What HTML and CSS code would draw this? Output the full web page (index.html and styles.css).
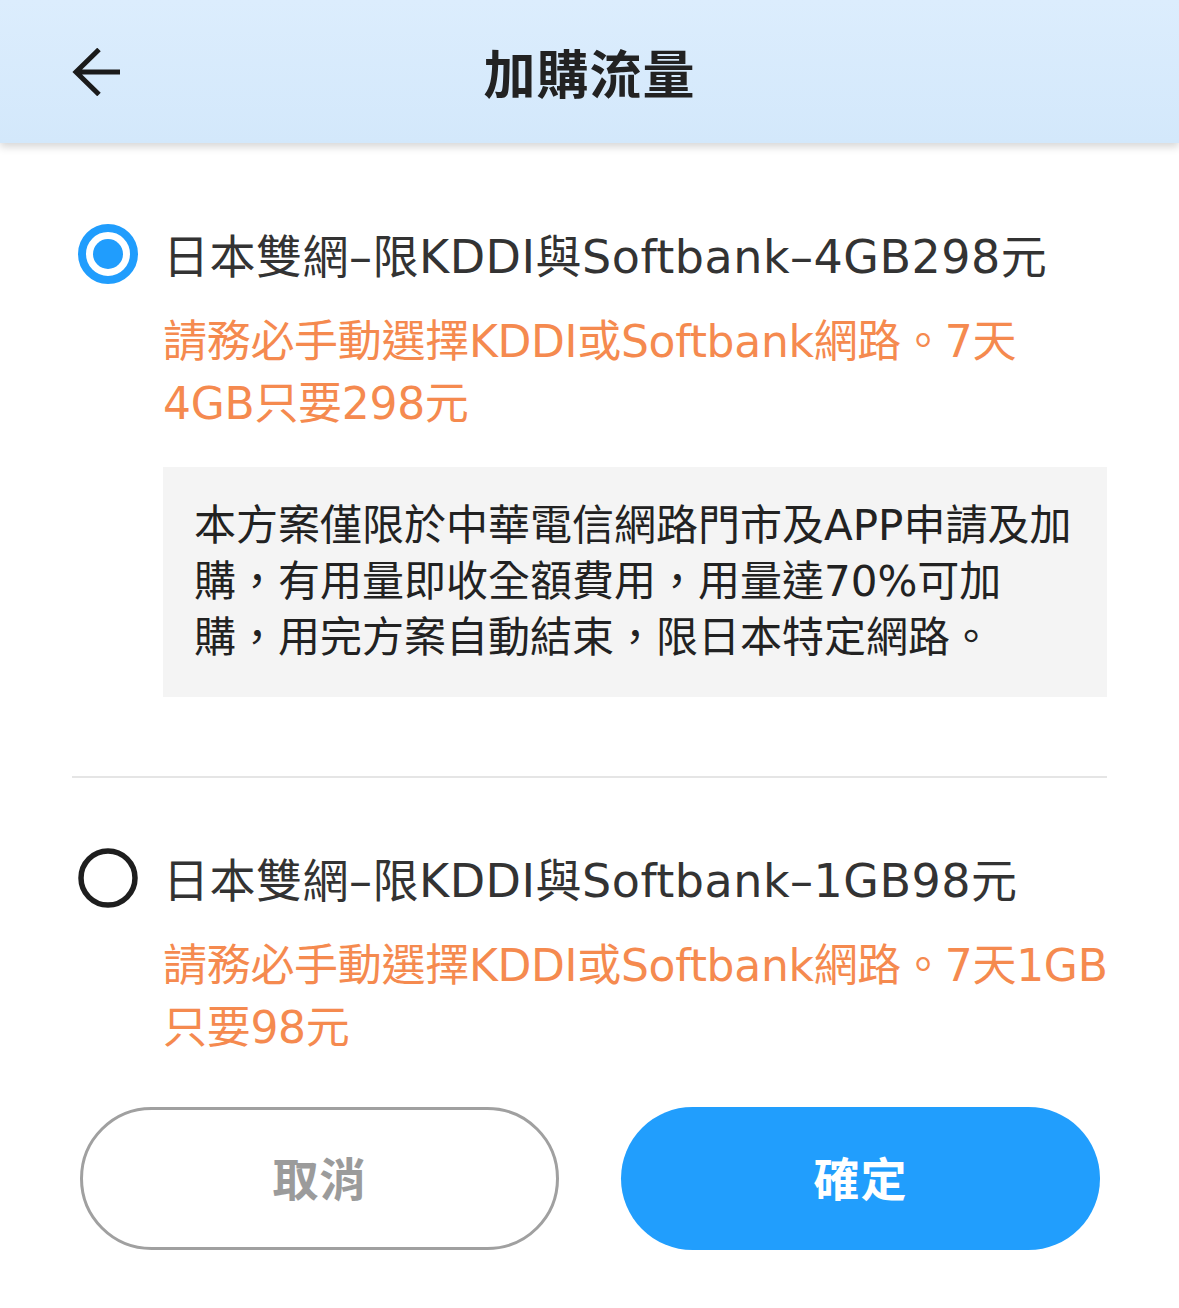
FILE: index.html
```html
<!DOCTYPE html>
<html lang="zh-Hant">
<head>
    <meta charset="UTF-8">
    <meta name="viewport" content="width=device-width, initial-scale=1.0">
    <title>加購流量</title>
    <link rel="stylesheet" href="styles.css">
</head>
<body>
    <header class="topbar">
        <button class="back-btn" aria-label="返回">
            <svg width="48" height="48" viewBox="0 0 48 48">
                <path d="M48 24H4 M27 1.5 L4 24 L27 46.5" fill="none" stroke="#1b1b1b" stroke-width="5"/>
            </svg>
        </button>
        <h1 class="topbar-title">加購流量</h1>
        <span></span>
    </header>

    <main class="content">
        <div class="option">
            <svg class="radio" width="60" height="60" viewBox="0 0 60 60">
                <circle cx="30" cy="30" r="26" fill="none" stroke="#209dfd" stroke-width="8"/>
                <circle cx="30" cy="30" r="15" fill="#209dfd"/>
            </svg>
            <div class="option-title">日本雙網–限KDDI與Softbank–4GB298元</div>
            <div class="option-body">
                <p class="option-note">請務必手動選擇KDDI或Softbank網路。7天<br>4GB只要298元</p>
                <div class="option-desc">
                    本方案僅限於中華電信網路門市及APP申請及加<br>購，有用量即收全額費用，用量達70%可加<br>購，用完方案自動結束，限日本特定網路。
                </div>
            </div>
        </div>

        <hr class="divider">

        <div class="option">
            <svg class="radio" width="60" height="60" viewBox="0 0 60 60">
                <circle cx="30" cy="30" r="27" fill="none" stroke="#1e1e1e" stroke-width="5.5"/>
            </svg>
            <div class="option-title">日本雙網–限KDDI與Softbank–1GB98元</div>
            <div class="option-body">
                <p class="option-note">請務必手動選擇KDDI或Softbank網路。7天1GB<br>只要98元</p>
            </div>
        </div>

        <div class="actions">
            <button class="btn btn-cancel">取消</button>
            <button class="btn btn-ok">確定</button>
        </div>
    </main>
</body>
</html>
```

FILE: styles.css
```css
body {
    margin: 0;
    background: #fff;
    font-family: "DejaVu Sans", "Noto Sans CJK TC", sans-serif;
    color: #333;
}

.topbar {
    height: 143px;
    display: grid;
    grid-template-columns: 1fr auto 1fr;
    align-items: center;
    padding: 0 72px;
    background: linear-gradient(180deg, #dcedfd, #d3e8fb);
    box-shadow: 0 4px 8px rgba(0, 0, 0, 0.16);
    position: relative;
}

.back-btn {
    width: 48px;
    height: 48px;
    padding: 0;
    border: none;
    background: none;
    display: flex;
}

.topbar-title {
    margin: 0;
    font-family: "Noto Sans CJK TC", sans-serif;
    font-size: 52px;
    font-weight: 700;
    color: #222;
    letter-spacing: 1px;
}

.content {
    padding: 81px 72px 0;
}

.option {
    display: grid;
    grid-template-columns: 60px 1fr;
    column-gap: 25px;
    align-items: center;
    padding-left: 6px;
}

.radio {
    margin-bottom: 6px;
}

.option-title {
    font-size: 46px;
    line-height: 60px;
    letter-spacing: 0.5px;
    color: #333;
    white-space: nowrap;
}

.option-body {
    grid-column: 2;
}

.option-note {
    margin: 21px 0 0;
    font-size: 44px;
    line-height: 62px;
    letter-spacing: -0.3px;
    color: #f58a4f;
    white-space: nowrap;
}

.option-desc {
    margin-top: 32px;
    padding: 31px 20px 31px 31px;
    background: #f4f4f4;
    font-size: 42px;
    line-height: 56px;
    color: #222;
    white-space: nowrap;
}

.divider {
    margin: 79px 0 70px;
    border: none;
    height: 2px;
    background: #e5e5e5;
}

.actions {
    display: grid;
    grid-template-columns: 1fr 1fr;
    column-gap: 62px;
    margin: 48px 7px 0 8px;
}

.btn {
    height: 143px;
    padding: 0 0 6px;
    border-radius: 72px;
    font-family: "Noto Sans CJK TC", sans-serif;
    font-size: 46px;
    font-weight: 700;
    letter-spacing: 1px;
}

.btn-cancel {
    background: #fff;
    border: 3px solid #a0a0a0;
    color: #9b9b9b;
}

.btn-ok {
    background: #219efd;
    border: none;
    color: #fff;
}
```
